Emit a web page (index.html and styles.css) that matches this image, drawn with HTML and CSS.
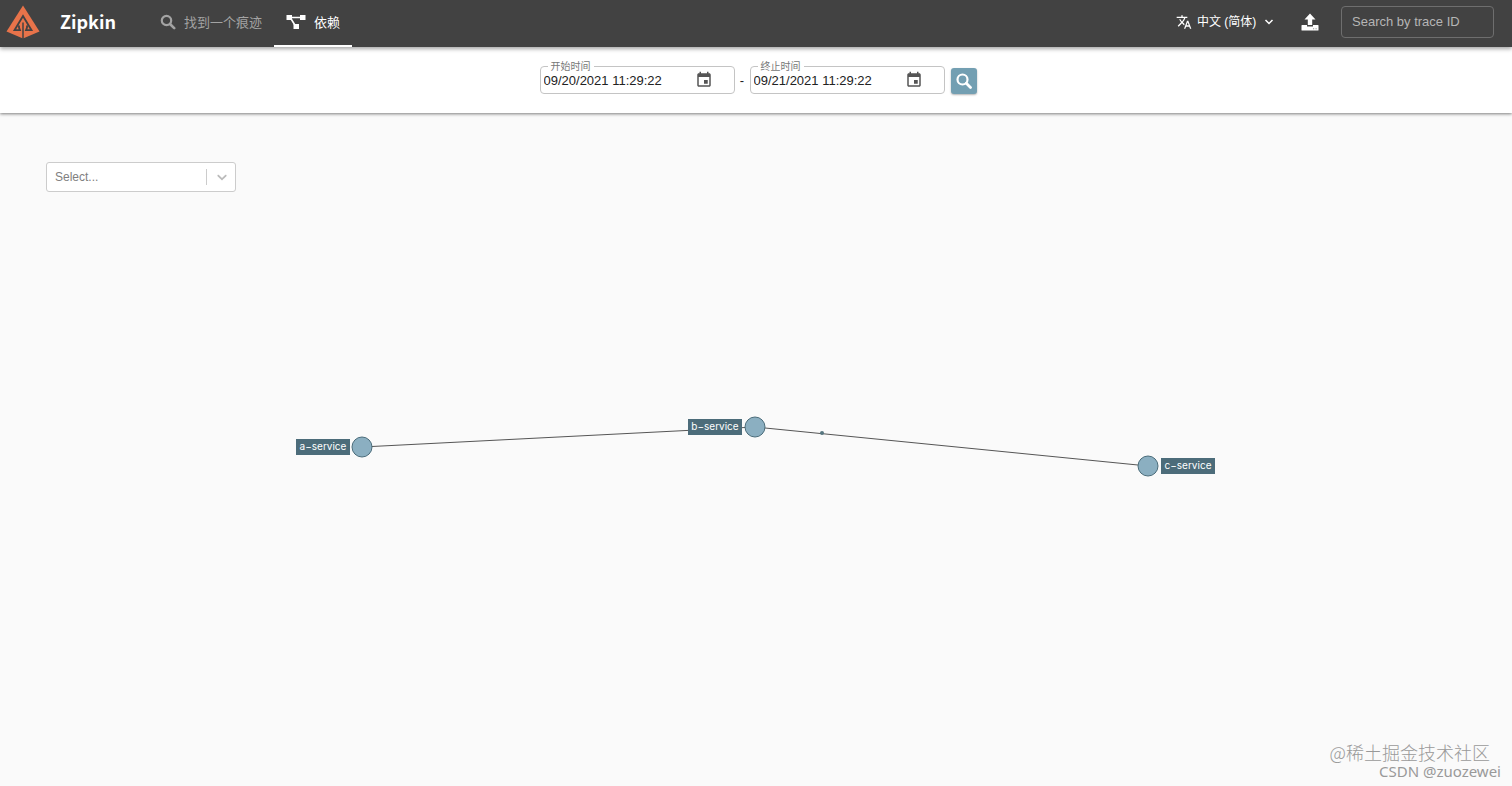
FILE: index.html
```html
<!DOCTYPE html>
<html lang="zh-CN">
<head>
    <meta charset="UTF-8">
    <meta name="viewport" content="width=device-width, initial-scale=1">
    <title>Zipkin</title>
    <link rel="stylesheet" href="styles.css">
</head>
<body>
<header class="app-bar">
    <a class="brand" href="#">
        <svg class="logo" viewBox="0 0 34 34" aria-hidden="true">
            <path fill="#e8734a" d="M17 0.500 L33.500 26.500 L17 33.500 L0.500 26.500 Z"/>
            <path fill="none" stroke="#424242" stroke-width="1.800" d="M13 20.500 V22.500 L14 25.200 H8.500 L17 11 L25.500 25.200 H20 L21 22.500 V20.500"/>
            <path stroke="#424242" stroke-width="1.500" d="M17 17.500 V34"/>
        </svg>
        <span class="brand-name">Zipkin</span>
    </a>
    <nav class="tabs">
        <a class="tab" href="#">
            <svg class="tab-icon" viewBox="0 0 16 16" aria-hidden="true">
                <circle cx="6.500" cy="6.500" r="4.700" fill="none" stroke="currentColor" stroke-width="2.200"/>
                <path d="M10 10 L14.200 14.200" stroke="currentColor" stroke-width="2.600" stroke-linecap="round"/>
            </svg>
            <span>找到一个痕迹</span>
        </a>
        <a class="tab active" href="#">
            <svg class="tab-icon wide" viewBox="0 0 20 16" aria-hidden="true">
                <path fill="currentColor" d="M0.500 1h5.500v5H0.500z M14 1h5.500v5H14z M7.500 10h5.500v5H7.500z"/>
                <path d="M5 3.500H15 M4.500 4L9.500 12" fill="none" stroke="currentColor" stroke-width="1.600"/>
            </svg>
            <span>依赖</span>
        </a>
    </nav>
    <div class="tools">
        <label class="language">
            <svg class="translate" viewBox="0 0 24 24" aria-hidden="true">
                <path fill="currentColor" d="M12.870 15.070l-2.540-2.510.030-.030c1.740-1.940 2.980-4.170 3.710-6.530H17V4h-7V2H8v2H1v1.990h11.170C11.500 7.920 10.440 9.750 9 11.350 8.070 10.320 7.300 9.190 6.690 8h-2c.730 1.630 1.730 3.170 2.980 4.560l-5.090 5.020L4 19l5-5 3.110 3.110.760-2.040zM18.500 10h-2L12 22h2l1.120-3h4.750L21 22h2l-4.500-12zm-2.620 7l1.620-4.330L19.120 17h-3.240z"/>
            </svg>
            <select aria-label="Language">
                <option>中文 (简体)</option>
            </select>
            <svg class="caret" viewBox="0 0 10 10" aria-hidden="true">
                <path d="M1.500 3 L5 6.500 L8.500 3" fill="none" stroke="currentColor" stroke-width="1.500"/>
            </svg>
        </label>
        <button class="upload" type="button" aria-label="Upload">
            <svg viewBox="0 0 18 18" aria-hidden="true">
                <path fill="currentColor" d="M9 0.500 L14.500 6.500 H11.200 V12 H6.800 V6.500 H3.500 Z"/>
                <path fill="currentColor" d="M1 12H6V13.500H12V12H17Q17.500 12 17.500 12.500V17Q17.500 17.500 17 17.500H1Q0.500 17.500 0.500 17V12.500Q0.500 12 1 12Z"/>
                <path fill="#999" d="M12 15.200h1.200v1H12z M14.500 15.200h1.200v1h-1.200z"/>
            </svg>
        </button>
        <input class="trace-id" type="text" placeholder="Search by trace ID" aria-label="Search by trace ID">
    </div>
</header>
<form class="search-bar">
    <fieldset class="date-field">
        <legend><label for="startTime">开始时间</label></legend>
        <input type="text" id="startTime" value="09/20/2021 11:29:22">
        <button type="button" aria-label="Pick start time">
            <svg viewBox="0 0 24 24" aria-hidden="true">
                <path fill="currentColor" d="M17 12h-5v5h5v-5zM16 1v2H8V1H6v2H5c-1.110 0-1.990.900-1.990 2L3 19c0 1.100.890 2 2 2h14c1.100 0 2-.900 2-2V5c0-1.100-.900-2-2-2h-1V1h-2zm3 18H5V8h14v11z"/>
            </svg>
        </button>
    </fieldset>
    <span class="dash">-</span>
    <fieldset class="date-field">
        <legend><label for="endTime">终止时间</label></legend>
        <input type="text" id="endTime" value="09/21/2021 11:29:22">
        <button type="button" aria-label="Pick end time">
            <svg viewBox="0 0 24 24" aria-hidden="true">
                <path fill="currentColor" d="M17 12h-5v5h5v-5zM16 1v2H8V1H6v2H5c-1.110 0-1.990.900-1.990 2L3 19c0 1.100.890 2 2 2h14c1.100 0 2-.900 2-2V5c0-1.100-.900-2-2-2h-1V1h-2zm3 18H5V8h14v11z"/>
            </svg>
        </button>
    </fieldset>
    <button class="search-button" type="submit" aria-label="Search">
        <svg viewBox="0 0 16 16" aria-hidden="true">
            <circle cx="6.500" cy="6.500" r="5" fill="none" stroke="currentColor" stroke-width="2.200"/>
            <path d="M10.300 10.300 L14.500 14.500" stroke="currentColor" stroke-width="2.800" stroke-linecap="round"/>
        </svg>
    </button>
</form>
<main class="dependencies">
    <svg class="graph" viewBox="0 0 1512 673" preserveAspectRatio="xMidYMin meet">
        <g class="edges">
            <line x1="362" y1="334" x2="755" y2="314"/>
            <line x1="755" y1="314" x2="1148" y2="353"/>
        </g>
        <circle class="particle" cx="822" cy="320" r="2"/>
        <g class="nodes">
            <circle cx="362" cy="334" r="10"/>
            <circle cx="755" cy="314" r="10"/>
            <circle cx="1148" cy="353" r="10"/>
        </g>
        <g class="labels">
            <rect x="296" y="326" width="54" height="16"/>
            <text x="323" y="337">a−service</text>
            <rect x="688" y="306" width="54" height="16"/>
            <text x="715" y="317">b−service</text>
            <rect x="1161" y="345" width="54" height="16"/>
            <text x="1188" y="356">c−service</text>
        </g>
    </svg>
    <div class="service-filter">
        <select aria-label="Service">
            <option>Select...</option>
        </select>
        <span class="indicator">
            <svg viewBox="0 0 20 20" aria-hidden="true">
                <path fill="currentColor" d="M4.516 7.548c0.436-0.446 1.043-0.481 1.576 0l3.908 3.747 3.908-3.747c0.533-0.481 1.141-0.446 1.574 0 0.436 0.445 0.408 1.197 0 1.615-0.406 0.418-4.695 4.502-4.695 4.502-0.217 0.223-0.502 0.335-0.787 0.335s-0.570-0.112-0.789-0.335c0 0-4.287-4.084-4.695-4.502s-0.436-1.170 0-1.615z"/>
            </svg>
        </span>
    </div>
    <div class="watermark">
        <span class="community">@稀土掘金技术社区</span>
        <span class="author">CSDN @zuozewei</span>
    </div>
</main>
</body>
</html>
```
FILE: styles.css
```css
* {
    box-sizing: border-box;
}

body {
    margin: 0;
    min-height: 100vh;
    display: flex;
    flex-direction: column;
    background: #fafafa;
    font-family: "Liberation Sans", "Noto Sans CJK SC", sans-serif;
    font-size: 13px;
    color: #222;
}

a {
    color: inherit;
    text-decoration: none;
}

button, input, select {
    margin: 0;
    padding: 0;
    border: 0;
    background: none;
    font: inherit;
    color: inherit;
}

button svg {
    display: block;
}

.app-bar {
    position: relative;
    z-index: 2;
    display: flex;
    height: 47px;
    padding: 0 18px 0 6px;
    background: #424242;
    color: #fff;
    box-shadow: 0 2px 4px rgba(0, 0, 0, 0.35);
}

.brand {
    display: flex;
    align-items: center;
    gap: 20px;
    height: 44px;
    margin-right: 32px;
}

.logo {
    width: 34px;
    height: 34px;
}

.brand-name {
    padding-bottom: 3px;
    font-family: "Noto Sans CJK SC", sans-serif;
    font-size: 18px;
    font-weight: bold;
}

.tabs {
    display: flex;
}

.tab {
    display: flex;
    align-items: center;
    gap: 8px;
    padding: 0 12px 2px;
    border-bottom: 2px solid transparent;
    color: #a3a3a3;
}

.tab.active {
    color: #fff;
    border-bottom-color: #fff;
}

.tab-icon {
    width: 16px;
    height: 16px;
}

.tab-icon.wide {
    width: 20px;
}

.tools {
    display: flex;
    align-items: center;
    height: 44px;
    margin-left: auto;
}

.language {
    display: flex;
    align-items: center;
    font-size: 12px;
}

.language select {
    appearance: none;
    margin: 0 7px 0 5px;
}

.translate {
    width: 16px;
    height: 16px;
}

.caret {
    width: 10px;
    height: 10px;
}

.upload {
    margin: 0 22px 0 27px;
}

.upload svg {
    width: 18px;
    height: 18px;
}

.trace-id {
    width: 153px;
    height: 32px;
    padding: 0 10px 1px;
    border: 1px solid #6e6e6e;
    border-radius: 4px;
}

.trace-id::placeholder {
    color: #b5b5b5;
}

.search-bar {
    position: relative;
    z-index: 1;
    display: flex;
    justify-content: center;
    align-items: flex-end;
    height: 66px;
    padding: 0 0 19px 4px;
    background: #fff;
    box-shadow: 0 1px 3px rgba(0, 0, 0, 0.5);
}

.date-field {
    display: flex;
    align-items: center;
    width: 195px;
    min-width: 0;
    margin: 0;
    padding: 0 21px 4px 3px;
    border: 1px solid #c4c4c4;
    border-radius: 4px;
}

.date-field legend {
    height: 10px;
    margin-left: 4px;
    padding: 1px 3px 0;
    font-size: 10px;
    line-height: 10px;
    color: #777;
}

.date-field input {
    flex: 1;
    min-width: 0;
    height: 17px;
}

.date-field button {
    color: #555;
}

.date-field button svg {
    width: 18px;
    height: 18px;
}

.dash {
    width: 15px;
    padding-bottom: 6px;
    text-align: center;
}

.search-button {
    display: grid;
    place-items: center;
    width: 26px;
    height: 26px;
    margin-left: 6px;
    border-radius: 3px;
    background: #739fb2;
    color: #fff;
    box-shadow: 0 1px 2px rgba(0, 0, 0, 0.3);
}

.search-button svg {
    width: 16px;
    height: 16px;
}

.dependencies {
    position: relative;
    flex: 1;
}

.graph {
    display: block;
    width: 100%;
}

.edges line {
    stroke: #555;
    stroke-width: 1;
}

.particle {
    fill: #56757f;
}

.nodes circle {
    fill: #8bafc1;
    stroke: #4a6c7a;
    stroke-width: 1;
}

.labels rect {
    fill: #4c6c7a;
}

.labels text {
    fill: #fff;
    font-family: Inter, sans-serif;
    font-size: 10px;
    text-anchor: middle;
}

/* floats over the graph */
.service-filter {
    position: absolute;
    top: 49px;
    left: 46px;
    width: 190px;
}

.service-filter select {
    appearance: none;
    width: 100%;
    height: 30px;
    padding: 0 38px 0 8px;
    border: 1px solid #ccc;
    border-radius: 3px;
    background: #fff;
    font-size: 12px;
    color: #808080;
}

.indicator {
    position: absolute;
    top: 7px;
    right: 0;
    display: flex;
    align-items: center;
    justify-content: center;
    width: 30px;
    height: 16px;
    border-left: 1px solid #ccc;
    color: #bbb;
    pointer-events: none;
}

.indicator svg {
    width: 16px;
    height: 16px;
}

.watermark {
    position: absolute;
    right: 11px;
    bottom: 6px;
    display: flex;
    flex-direction: column;
    align-items: flex-end;
    font-family: "Noto Sans CJK SC", sans-serif;
    color: #999;
}

.community {
    padding-right: 11px;
    font-size: 18px;
    font-weight: 300;
    line-height: 20px;
}

.author {
    font-family: "Noto Sans", sans-serif;
    font-size: 15px;
    line-height: 18px;
}
```
